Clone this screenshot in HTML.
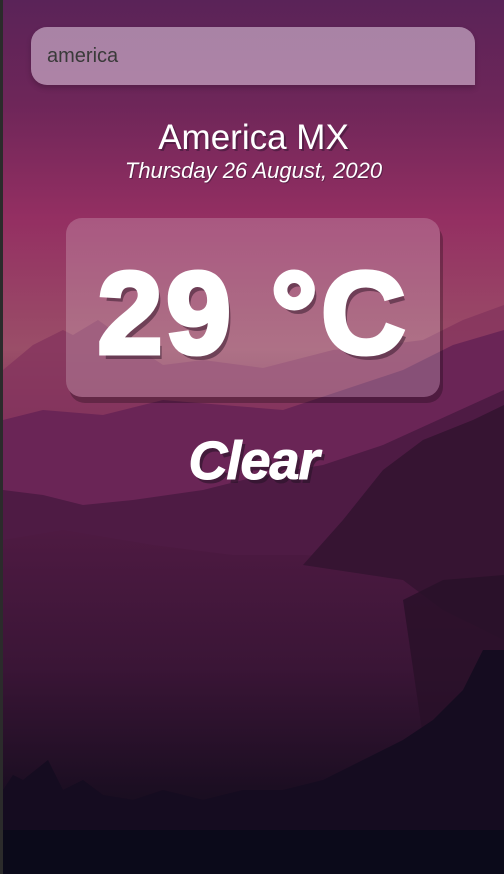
<!DOCTYPE html>
<html><head><meta charset="utf-8"><style>
html,body{margin:0;padding:0;width:504px;height:874px;overflow:hidden;background:#1a1020}
.wrap{position:absolute;left:3px;top:0;width:501px;height:874px;overflow:hidden}
.edge{position:absolute;left:0;top:0;width:3px;height:874px;background:#2b2b2b}
svg.bg{position:absolute;left:0;top:0}
.search{position:absolute;left:28px;top:27px;width:444px;height:58px;background:rgba(230,210,230,0.55);border-radius:16px 16px 0 16px;box-shadow:0 3px 6px rgba(0,0,0,0.2);box-sizing:border-box;padding-left:16px;font:20px "Liberation Sans",sans-serif;color:#3a3a3a;line-height:58px}
.city{position:absolute;left:0;width:501px;top:118px;text-align:center;font:35px "Liberation Sans",sans-serif;color:#fff;text-shadow:2px 2px rgba(50,20,50,0.5)}
.date{position:absolute;left:0;width:501px;top:158px;text-align:center;font:italic 22px "Liberation Sans",sans-serif;color:#fff;text-shadow:1px 1px rgba(50,20,50,0.5)}
.box{position:absolute;left:63px;top:218px;width:374px;height:179px;border-radius:16px;background:rgba(255,255,255,0.2);box-shadow:3px 6px rgba(0,0,0,0.25)}
.temp{position:absolute;left:0;width:501px;top:244px;text-align:center;font:bold 116px/1.2 "Liberation Sans",sans-serif;letter-spacing:4px;color:#fff;-webkit-text-stroke:5px #fff;text-shadow:4px 6px rgba(60,30,50,0.55)}
.cond{position:absolute;left:0;width:501px;top:430px;text-align:center;font:italic bold 54px "Liberation Sans",sans-serif;letter-spacing:-1px;color:#fff;-webkit-text-stroke:1px #fff;text-shadow:3px 4px rgba(40,20,40,0.6)}
</style></head><body>
<div class="edge"></div>
<div class="wrap">
<svg class="bg" width="501" height="874" viewBox="0 0 501 874">
<defs>
<linearGradient id="sky" x1="0" y1="0" x2="0" y2="1">
<stop offset="0" stop-color="#5a2358"/><stop offset="0.12" stop-color="#6e2659"/><stop offset="0.25" stop-color="#942f62"/><stop offset="0.4" stop-color="#9a4e68"/><stop offset="0.5" stop-color="#7a2e58"/><stop offset="1" stop-color="#4a1a44"/>
</linearGradient>
<linearGradient id="low" x1="0" y1="0" x2="0" y2="1">
<stop offset="0" stop-color="#4e1a42"/><stop offset="0.4" stop-color="#3a1536"/><stop offset="0.75" stop-color="#1c0e22"/><stop offset="1" stop-color="#0a0a18"/>
</linearGradient>
</defs>
<rect width="501" height="874" fill="url(#sky)"/>
<polygon points="0,370 30,345 60,330 70,335 95,320 130,345 160,365 200,360 260,368 330,350 380,345 420,340 460,320 501,305 501,520 0,520" fill="#84345e" opacity="0.8"/>
<polygon points="0,420 40,410 100,415 160,400 220,405 280,410 340,390 400,370 450,345 501,330 501,874 0,874" fill="#6a2556"/>
<polygon points="0,490 40,495 80,505 130,500 200,490 260,475 320,465 380,445 501,390 501,874 0,874" fill="#4e1b44"/>
<polygon points="0,540 60,530 150,545 230,555 300,555 420,560 501,560 501,874 0,874" fill="url(#low)"/>
<polygon points="300,565 340,520 380,470 420,440 470,420 501,405 501,640 440,610 400,580" fill="#361432"/>
<polygon points="400,600 440,580 501,575 501,874 440,874" fill="#281028" opacity="0.8"/>
<polygon points="0,874 0,790 10,775 20,780 45,760 60,790 80,780 100,795 130,800 160,790 200,800 240,790 280,790 320,780 360,760 400,740 430,720 460,690 480,650 501,650 501,874" fill="#150c20"/>
<rect x="0" y="830" width="501" height="44" fill="#0b0a1a"/>
</svg>
<div class="search">america</div>
<div class="city">America MX</div>
<div class="date">Thursday 26 August, 2020</div>
<div class="box"></div>
<div class="temp">29 °C</div>
<div class="cond">Clear</div>
</div>
</body></html>
